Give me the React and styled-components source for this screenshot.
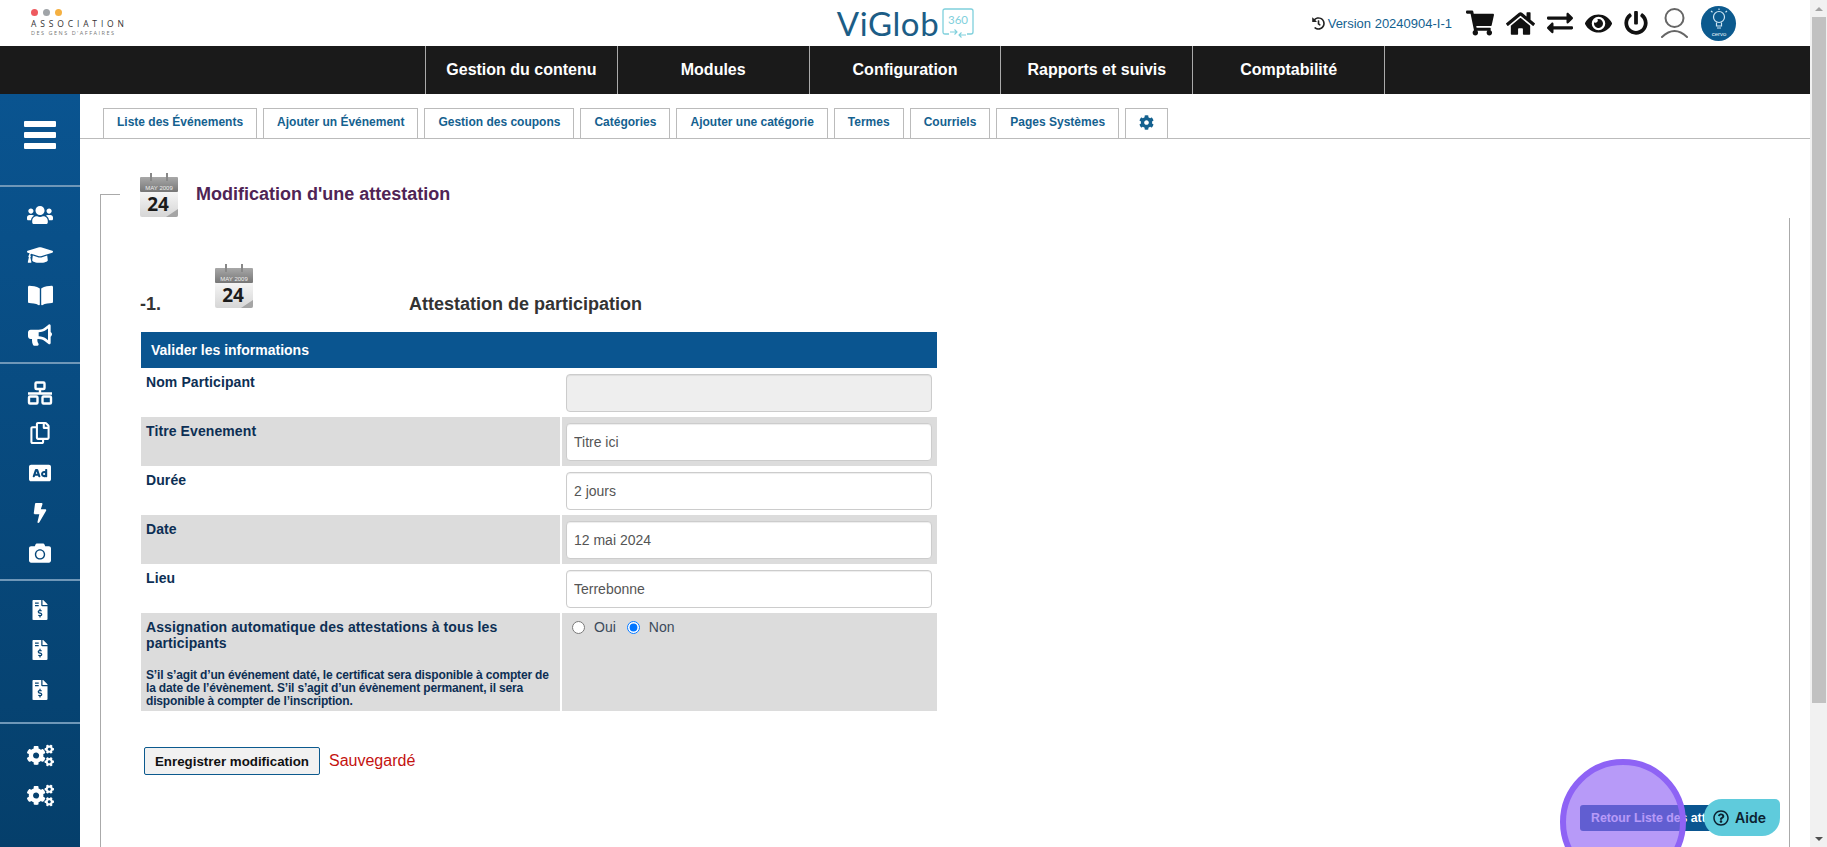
import styled, { createGlobalStyle } from "styled-components";
import {
  FaUsers,
  FaGraduationCap,
  FaBookOpen,
  FaBullhorn,
  FaRegCopy,
  FaAd,
  FaBolt,
  FaCamera,
  FaFileInvoiceDollar,
  FaCogs,
  FaHistory,
  FaShoppingCart,
  FaHome,
  FaExchangeAlt,
  FaEye,
  FaPowerOff,
  FaCog,
  FaRegQuestionCircle,
} from "react-icons/fa";

const GlobalStyle = createGlobalStyle`
  html, body {
    margin: 0;
    height: 100%;
    overflow: hidden;
    background: #fff;
    font-family: "Liberation Sans", Arial, sans-serif;
  }
`;

const Page = styled.div`
  display: flex;
  width: 1827px;
  height: 847px;
  overflow: hidden;
`;

const Main = styled.div`
  flex: 1;
  min-width: 0;
  display: flex;
  flex-direction: column;
`;

// Top white bar
const TopBar = styled.header`
  height: 46px;
  flex: none;
  display: grid;
  grid-template-columns: 1fr auto 1fr;
  align-items: center;
  padding: 0 0 0 31px;
`;

const AssocLogo = styled.div`
  display: flex;
  flex-direction: column;
  width: 120px;
`;

const Dots = styled.div`
  display: flex;
  gap: 5px;
  margin-bottom: 2px;
`;

const Dot = styled.span`
  width: 7px;
  height: 7px;
  border-radius: 50%;
  background: ${(p) => p.$color};
`;

const AssocName = styled.span`
  font-family: "Open Sans", sans-serif;
  font-size: 8.5px;
  line-height: 11px;
  letter-spacing: 3.85px;
  color: #333;
  white-space: nowrap;
`;

const AssocSub = styled.span`
  font-family: "Open Sans", sans-serif;
  font-size: 5.5px;
  line-height: 8px;
  letter-spacing: 1.5px;
  color: #777;
  white-space: nowrap;
`;

const ViGlobLogo = styled.div`
  display: flex;
  align-items: center;
  gap: 3px;
  margin-right: 30px;
`;

const ViGlobText = styled.span`
  font-family: Lato, sans-serif;
  font-weight: 400;
  font-size: 33px;
  line-height: 46px;
  letter-spacing: 0.6px;
  color: #1c5d86;
`;

const TopTools = styled.div`
  justify-self: end;
  display: flex;
  align-items: center;
  padding-right: 74px;
`;

const Version = styled.span`
  display: flex;
  align-items: center;
  gap: 3px;
  font-size: 13px;
  color: #14618f;
  margin-right: 14px;
  white-space: nowrap;
`;

const ToolIcons = styled.div`
  display: flex;
  align-items: center;
  gap: 12px;
  color: #111;
`;

const Avatar = styled.span`
  width: 35px;
  height: 35px;
  border-radius: 50%;
  background: #0c5a8e;
  display: flex;
  align-items: center;
  justify-content: center;
`;

// Black nav
const Nav = styled.nav`
  height: 48px;
  flex: none;
  background: #1a1a1a;
  display: flex;
  padding-left: 425px;
`;

const NavItem = styled.div`
  box-sizing: border-box;
  width: 191.8px;
  border-left: 1px solid #aaa;
  color: #fff;
  font-size: 16px;
  font-weight: 700;
  display: flex;
  align-items: center;
  justify-content: center;
  &:last-child {
    width: 192.8px;
    border-right: 1px solid #aaa;
  }
`;

const Body = styled.div`
  flex: 1;
  min-height: 0;
  display: flex;
`;

// Left sidebar
const Sidebar = styled.aside`
  width: 80px;
  flex: none;
  background: linear-gradient(#0a5490, #053f6b);
  display: flex;
  flex-direction: column;
`;

const SideGroup = styled.div`
  display: flex;
  flex-direction: column;
  align-items: center;
  gap: 16px;
  padding-top: ${(p) => p.$top}px;
  height: ${(p) => p.$height}px;
  box-sizing: border-box;
  border-bottom: ${(p) => (p.$last ? "none" : "2px solid #6f97b8")};
  color: #fff;
`;

const SideIcon = styled.span`
  height: 24px;
  display: flex;
  align-items: center;
  justify-content: center;
`;

const Burger = styled.div`
  width: 32px;
  display: flex;
  flex-direction: column;
  gap: 5px;
  margin-top: 7px;
  span {
    height: 6px;
    border-radius: 1px;
    background: #fff;
  }
`;

const Content = styled.main`
  flex: 1;
  min-width: 0;
  display: flex;
  flex-direction: column;
  position: relative;
`;

// Sub tabs
const Tabs = styled.div`
  height: 45px;
  flex: none;
  box-sizing: border-box;
  padding: 14px 0 0 23px;
  display: flex;
  gap: 6px;
  border-bottom: 1px solid #bbb;
`;

const Tab = styled.div`
  box-sizing: border-box;
  height: 30px;
  padding: 0 13px 3px;
  border: 1px solid #bbb;
  border-bottom: none;
  background: #fff;
  color: #14618f;
  font-size: 12px;
  font-weight: 700;
  display: flex;
  align-items: center;
  white-space: nowrap;
`;

// Fieldset like frame
const Frame = styled.section`
  position: relative;
  margin: 55px 20px 0 20px;
  flex: 1;
  border-left: 1px solid #aaa;
  padding: 0 0 0 40px;
  &::before {
    content: "";
    position: absolute;
    left: 0;
    top: 0;
    width: 19px;
    border-top: 1px solid #aaa;
  }
  &::after {
    content: "";
    position: absolute;
    right: 0;
    top: 24px;
    bottom: 0;
    border-right: 1px solid #aaa;
  }
`;

const Legend = styled.div`
  display: flex;
  align-items: center;
  gap: 18px;
  margin: -21px 0 0 -1px;
`;

const PageTitle = styled.h1`
  margin: 0 0 2px;
  font-size: 18px;
  font-weight: 700;
  color: #4f2455;
`;

const SubHead = styled.div`
  display: flex;
  align-items: flex-end;
  width: 796px;
  margin: 47px 0 0 -1px;
  height: 54px;
`;

const Rank = styled.span`
  width: 75px;
  font-size: 18px;
  font-weight: 700;
  color: #333;
  line-height: 20px;
  margin-bottom: 4px;
`;

const IconSlot = styled.span`
  width: 194px;
  align-self: flex-start;
`;

const SubTitle = styled.h2`
  margin: 0 0 4px;
  font-size: 18px;
  font-weight: 700;
  line-height: 20px;
  color: #333;
`;

const Form = styled.div`
  width: 796px;
  margin-top: 14px;
`;

const FormHead = styled.div`
  height: 36px;
  background: #0a5590;
  color: #fff;
  font-size: 14px;
  font-weight: 700;
  display: flex;
  align-items: center;
  padding-left: 10px;
`;

const Row = styled.div`
  display: grid;
  grid-template-columns: 419px 1fr;
  column-gap: 2px;
  height: ${(p) => p.$height || 49}px;
  background: ${(p) => (p.$shaded ? "#dcdcdc" : "#fff")};
  background-image: ${(p) =>
    p.$shaded
      ? "linear-gradient(90deg, transparent 419px, #fff 419px, #fff 421px, transparent 421px)"
      : "none"};
`;

const LabelCell = styled.div`
  padding: 6px 5px 0 5px;
  color: #0d2f54;
  font-size: 14px;
  font-weight: 700;
  line-height: 16px;
  letter-spacing: 0.1px;
`;

const Note = styled.p`
  margin: 18px 0 0 0;
  font-size: 12px;
  line-height: 13px;
  letter-spacing: -0.16px;
`;

const InputCell = styled.div`
  padding: 6px 5px 6px 4px;
`;

const Field = styled.input`
  display: block;
  box-sizing: border-box;
  width: 100%;
  height: 38px;
  padding: 0 7px;
  border: 1px solid #ccc;
  border-radius: 4px;
  background: ${(p) => (p.disabled ? "#eee" : "#fff")};
  color: #555;
  font-family: inherit;
  font-size: 14px;
  box-shadow: inset 0 1px 1px rgba(0, 0, 0, 0.075);
`;

const Radios = styled.div`
  display: flex;
  align-items: flex-start;
  padding: 6px 4px;
  font-size: 14px;
  line-height: 16px;
  color: #3b4a5a;
  input {
    margin: 0 9px 0 6px;
  }
  label {
    margin-right: 5px;
    display: flex;
    align-items: center;
  }
`;

const Actions = styled.div`
  display: flex;
  align-items: center;
  gap: 9px;
  margin-top: 36px;
  padding-left: 3px;
`;

const SaveBtn = styled.button`
  box-sizing: border-box;
  height: 28px;
  width: 176px;
  padding: 0;
  border: 1px solid #0c5a8e;
  border-radius: 2px;
  background: #f1f1f1;
  color: #111;
  font-family: inherit;
  font-size: 13.33px;
  font-weight: 700;
`;

const Saved = styled.span`
  font-size: 16px;
  color: #c4120f;
`;

// Overlays at bottom right
const BackBtn = styled.div`
  position: absolute;
  left: 1500px;
  top: 711px;
  box-sizing: border-box;
  height: 26px;
  padding: 0 11px;
  width: 190px;
  background: #0a5590;
  color: #fff;
  font-size: 12.3px;
  font-weight: 700;
  border-radius: 3px;
  display: flex;
  align-items: center;
  white-space: nowrap;
  overflow: hidden;
`;

const Spot = styled.div`
  position: absolute;
  left: 1480px;
  top: 665px;
  box-sizing: border-box;
  width: 126px;
  height: 126px;
  border-radius: 50%;
  border: 6px solid #8e63f5;
  background: rgba(144, 100, 245, 0.65);
`;

const HelpBtn = styled.div`
  position: absolute;
  left: 1624px;
  top: 705px;
  box-sizing: border-box;
  width: 76px;
  height: 37px;
  background: #5fcbdc;
  border-radius: 18px 5px 18px 18px;
  display: flex;
  align-items: center;
  gap: 6px;
  padding-left: 9px;
  color: #0c2130;
  font-family: Inter, sans-serif;
  font-size: 14px;
  font-weight: 600;
`;

// Fake page scrollbar
const Scrollbar = styled.div`
  width: 17px;
  flex: none;
  background: #f1f1f1;
  display: flex;
  flex-direction: column;
  align-items: center;
`;

const ScrollArrow = styled.span`
  height: 17px;
  flex: none;
  width: 100%;
  display: flex;
  align-items: center;
  justify-content: center;
  &::before {
    content: "";
    border-left: 4px solid transparent;
    border-right: 4px solid transparent;
    ${(p) => (p.$down ? "border-top: 4px solid #505050;" : "border-bottom: 4px solid #a3a3a3;")}
  }
`;

const ScrollThumb = styled.span`
  width: 14px;
  height: 686px;
  flex: none;
  background: #c1c1c1;
`;

const ScrollGap = styled.span`
  flex: 1;
`;

function CalendarIcon() {
  return (
    <svg width="38" height="44" viewBox="0 0 38 44">
      <defs>
        <linearGradient id="calTop" x1="0" y1="0" x2="0" y2="1">
          <stop offset="0" stopColor="#a8a8a8" />
          <stop offset="1" stopColor="#777" />
        </linearGradient>
        <linearGradient id="calBody" x1="0" y1="0" x2="0" y2="1">
          <stop offset="0" stopColor="#f6f6f6" />
          <stop offset="1" stopColor="#d6d6d6" />
        </linearGradient>
      </defs>
      <rect x="0" y="18" width="38" height="26" rx="2" fill="url(#calBody)" />
      <rect x="0" y="4" width="38" height="15" rx="1" fill="url(#calTop)" />
      <rect x="10" y="0" width="2" height="8" fill="#888" />
      <rect x="26" y="0" width="2" height="8" fill="#888" />
      <text x="19" y="17" textAnchor="middle" fontSize="6" fill="#eee" fontFamily="Liberation Sans">
        MAY 2009
      </text>
      <text x="18" y="38" textAnchor="middle" fontSize="19" fontWeight="700" fill="#1b1b1b" fontFamily="Open Sans">
        24
      </text>
      <path d="M26 44 L38 36 L38 42 Q38 44 36 44 Z" fill="#a5a5a5" />
    </svg>
  );
}

function ViGlobBadge() {
  return (
    <svg width="32" height="30" viewBox="0 0 32 30" fill="none" stroke="#7fd0dc" strokeWidth="1.3">
      <path d="M7 26 H3 Q1 26 1 24 V3 Q1 1 3 1 H29 Q31 1 31 3 V24 Q31 26 29 26 H25" />
      <path d="M8 24 H15 M12.5 21.5 L15 24 L12.5 26.5 M24 27 H17 M19.5 24.5 L17 27 L19.5 29.5" strokeWidth="1.1" />
      <text x="16" y="16" textAnchor="middle" fontSize="11.5" fill="#7fd0dc" stroke="none" fontFamily="Lato">
        360
      </text>
    </svg>
  );
}

function UserOutline() {
  return (
    <svg width="29" height="30" viewBox="0 0 29 30" fill="none" stroke="#666" strokeWidth="2" strokeLinecap="round">
      <circle cx="14.5" cy="10" r="9" />
      <path d="M2 29 Q14.5 17 27 29" />
    </svg>
  );
}

function BulbBadge() {
  return (
    <svg width="24" height="30" viewBox="0 0 24 30" fill="none" stroke="#cfe6f4" strokeWidth="1.2">
      <circle cx="12" cy="9" r="5.5" />
      <path d="M9.5 14.5 V18 H14.5 V14.5 M10 20 H14" />
      <path d="M12 0.5 V2 M4 3 L5.5 4.2 M20 3 L18.5 4.2" />
      <text x="12" y="28" textAnchor="middle" fontSize="6" fill="#e6f2fa" stroke="none" fontFamily="Liberation Sans">
        cervo
      </text>
    </svg>
  );
}

function NetworkIcon() {
  return (
    <svg width="26" height="24" viewBox="0 0 26 24" fill="none" stroke="#fff" strokeWidth="2.4">
      <rect x="8.5" y="1.5" width="9" height="6.5" rx="1" />
      <path d="M13 8 V12 M1 12.5 H25" />
      <rect x="2" y="15.5" width="8.5" height="7" rx="1" />
      <rect x="15.5" y="15.5" width="8.5" height="7" rx="1" />
    </svg>
  );
}

const tabs = [
  "Liste des Événements",
  "Ajouter un Événement",
  "Gestion des coupons",
  "Catégories",
  "Ajouter une catégorie",
  "Termes",
  "Courriels",
  "Pages Systèmes",
];

const navItems = ["Gestion du contenu", "Modules", "Configuration", "Rapports et suivis", "Comptabilité"];

export default function App() {
  return (
    <>
      <GlobalStyle />
      <Page>
        <Main>
          <TopBar>
            <AssocLogo>
              <Dots>
                <Dot $color="#ee5a5f" />
                <Dot $color="#a0a4a8" />
                <Dot $color="#f5b041" />
              </Dots>
              <AssocName>ASSOCIATION</AssocName>
              <AssocSub>DES GENS D'AFFAIRES</AssocSub>
            </AssocLogo>
            <ViGlobLogo>
              <ViGlobText>ViGlob</ViGlobText>
              <ViGlobBadge />
            </ViGlobLogo>
            <TopTools>
              <Version>
                <FaHistory size={13} color="#222" />
                Version 20240904-I-1
              </Version>
              <ToolIcons>
                <FaShoppingCart size={28} />
                <FaHome size={29} />
                <FaExchangeAlt size={26} />
                <FaEye size={27} />
                <FaPowerOff size={24} />
                <UserOutline />
                <Avatar>
                  <BulbBadge />
                </Avatar>
              </ToolIcons>
            </TopTools>
          </TopBar>
          <Nav>
            {navItems.map((item) => (
              <NavItem key={item}>{item}</NavItem>
            ))}
          </Nav>
          <Body>
            <Sidebar>
              <SideGroup $height={93} $top={20}>
                <Burger>
                  <span />
                  <span />
                  <span />
                </Burger>
              </SideGroup>
              <SideGroup $height={177} $top={16}>
                <SideIcon><FaUsers size={26} /></SideIcon>
                <SideIcon><FaGraduationCap size={26} /></SideIcon>
                <SideIcon><FaBookOpen size={25} /></SideIcon>
                <SideIcon><FaBullhorn size={24} /></SideIcon>
              </SideGroup>
              <SideGroup $height={217} $top={17}>
                <SideIcon><NetworkIcon /></SideIcon>
                <SideIcon><FaRegCopy size={22} /></SideIcon>
                <SideIcon><FaAd size={22} /></SideIcon>
                <SideIcon><FaBolt size={20} /></SideIcon>
                <SideIcon><FaCamera size={22} /></SideIcon>
              </SideGroup>
              <SideGroup $height={143} $top={17}>
                <SideIcon><FaFileInvoiceDollar size={20} /></SideIcon>
                <SideIcon><FaFileInvoiceDollar size={20} /></SideIcon>
                <SideIcon><FaFileInvoiceDollar size={20} /></SideIcon>
              </SideGroup>
              <SideGroup $height={123} $top={19} $last>
                <SideIcon><FaCogs size={27} /></SideIcon>
                <SideIcon><FaCogs size={27} /></SideIcon>
              </SideGroup>
            </Sidebar>
            <Content>
              <Tabs>
                {tabs.map((t) => (
                  <Tab key={t}>{t}</Tab>
                ))}
                <Tab>
                  <FaCog size={15} />
                </Tab>
              </Tabs>
              <Frame>
                <Legend>
                  <CalendarIcon />
                  <PageTitle>Modification d'une attestation</PageTitle>
                </Legend>
                <SubHead>
                  <Rank>-1.</Rank>
                  <IconSlot>
                    <CalendarIcon />
                  </IconSlot>
                  <SubTitle>Attestation de participation</SubTitle>
                </SubHead>
                <Form>
                  <FormHead>Valider les informations</FormHead>
                  <Row>
                    <LabelCell>Nom Participant</LabelCell>
                    <InputCell><Field disabled /></InputCell>
                  </Row>
                  <Row $shaded>
                    <LabelCell>Titre Evenement</LabelCell>
                    <InputCell><Field readOnly value="Titre ici" /></InputCell>
                  </Row>
                  <Row>
                    <LabelCell>Durée</LabelCell>
                    <InputCell><Field readOnly value="2 jours" /></InputCell>
                  </Row>
                  <Row $shaded>
                    <LabelCell>Date</LabelCell>
                    <InputCell><Field readOnly value="12 mai 2024" /></InputCell>
                  </Row>
                  <Row>
                    <LabelCell>Lieu</LabelCell>
                    <InputCell><Field readOnly value="Terrebonne" /></InputCell>
                  </Row>
                  <Row $shaded $height={98}>
                    <LabelCell>
                      Assignation automatique des attestations à tous les participants
                      <Note>
                        S’il s’agit d’un événement daté, le certificat sera disponible à compter de la date de l’évènement. S’il s’agit d’un évènement permanent, il sera disponible à compter de l’inscription.
                      </Note>
                    </LabelCell>
                    <Radios>
                      <label><input type="radio" name="auto" readOnly />Oui</label>
                      <label><input type="radio" name="auto" checked readOnly />Non</label>
                    </Radios>
                  </Row>
                </Form>
                <Actions>
                  <SaveBtn>Enregistrer modification</SaveBtn>
                  <Saved>Sauvegardé</Saved>
                </Actions>
              </Frame>
              <BackBtn>Retour Liste des attestations</BackBtn>
              <Spot />
              <HelpBtn>
                <FaRegQuestionCircle size={16} />
                Aide
              </HelpBtn>
            </Content>
          </Body>
        </Main>
        <Scrollbar>
          <ScrollArrow />
          <ScrollThumb />
          <ScrollGap />
          <ScrollArrow $down />
        </Scrollbar>
      </Page>
    </>
  );
}
